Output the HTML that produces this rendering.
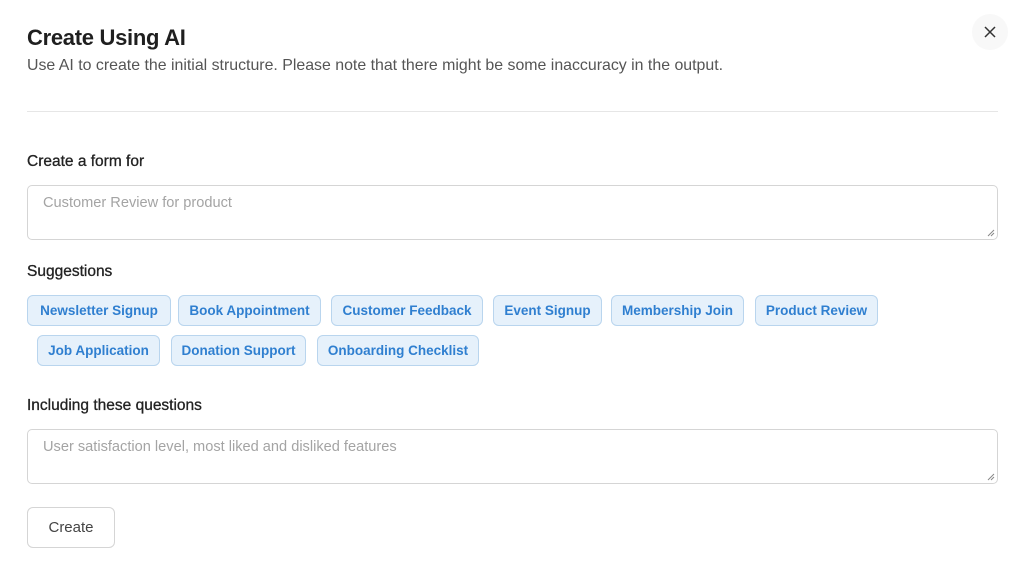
<!DOCTYPE html><html><head><style>
body{margin:0;width:1024px;height:564px;background:#fff;font-family:"Liberation Sans",sans-serif;position:relative;overflow:hidden}
.a{position:absolute}
h1{position:absolute;left:27px;top:25px;margin:0;font-size:22px;font-weight:bold;color:#1f1f1f;letter-spacing:-0.3px}
.sub{left:27px;top:57px;font-size:15.9px;color:#555}
.lbl{left:27px;font-size:15.5px;color:#222;-webkit-text-stroke:0.3px #222}
.ta{left:27px;width:971px;height:55px;border:1px solid #d5d5d5;border-radius:5px;box-sizing:border-box;padding:9px 15px;color:#a4a4a4;font-size:14.6px}
.ta svg{position:absolute;right:2px;bottom:2px}
.chip{height:31px;border:1px solid #b9d5ee;background:#e6f1fb;border-radius:6px;box-sizing:border-box;color:#2f7fd0;font-size:13.5px;font-weight:bold;display:flex;align-items:center;justify-content:center}
</style></head><body>
<h1>Create Using AI</h1>
<div class="a sub">Use AI to create the initial structure. Please note that there might be some inaccuracy in the output.</div>
<div class="a" style="left:972px;top:14px;width:36px;height:36px;border-radius:50%;background:#f8f8f8"></div>
<svg class="a" style="left:984px;top:26px" width="12" height="12"><path d="M1 1L11 11M11 1L1 11" stroke="#333" stroke-width="1.5"/></svg>
<div class="a" style="left:27px;top:111px;width:971px;height:1px;background:#e6e6e6"></div>
<div class="a lbl" style="top:153px">Create a form for</div>
<div class="a ta" style="top:185px">Customer Review for product<svg width="8" height="8"><path d="M7 1L1 7M7 4L4 7" stroke="#888"/></svg></div>
<div class="a lbl" style="top:263px">Suggestions</div>
<div class="a chip" style="left:27px;top:295px;width:144px">Newsletter Signup</div>
<div class="a chip" style="left:178px;top:295px;width:143px">Book Appointment</div>
<div class="a chip" style="left:331px;top:295px;width:152px">Customer Feedback</div>
<div class="a chip" style="left:493px;top:295px;width:109px">Event Signup</div>
<div class="a chip" style="left:611px;top:295px;width:133px">Membership Join</div>
<div class="a chip" style="left:755px;top:295px;width:123px">Product Review</div>
<div class="a chip" style="left:37px;top:335px;width:123px">Job Application</div>
<div class="a chip" style="left:171px;top:335px;width:135px">Donation Support</div>
<div class="a chip" style="left:317px;top:335px;width:162px">Onboarding Checklist</div>
<div class="a lbl" style="top:397px">Including these questions</div>
<div class="a ta" style="top:429px">User satisfaction level, most liked and disliked features<svg width="8" height="8"><path d="M7 1L1 7M7 4L4 7" stroke="#888"/></svg></div>
<div class="a" style="left:27px;top:507px;width:88px;height:41px;border:1px solid #d5d5d5;border-radius:6px;box-sizing:border-box;display:flex;align-items:center;justify-content:center;font-size:15px;color:#444">Create</div>
</body></html>
